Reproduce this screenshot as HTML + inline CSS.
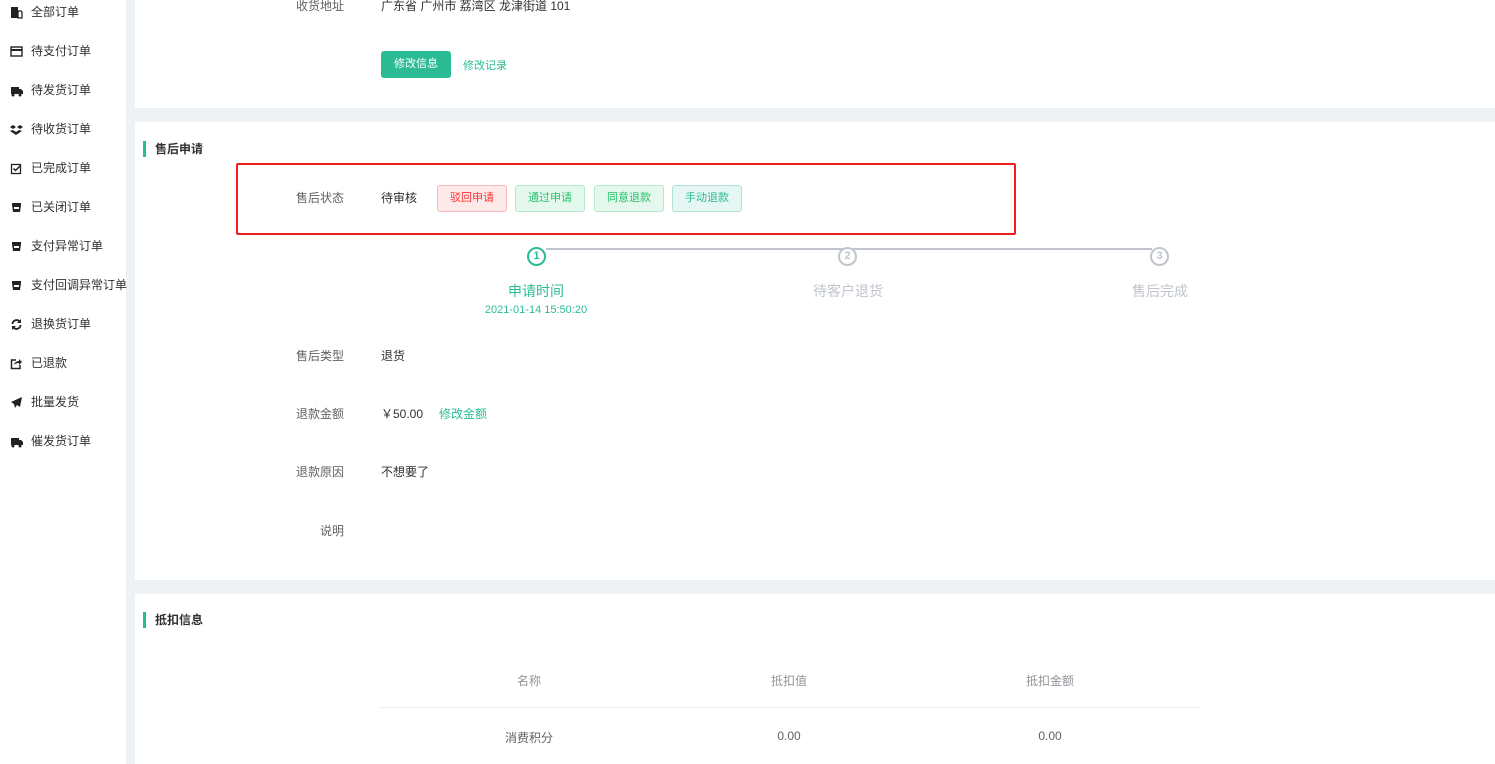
<!DOCTYPE html>
<html><head><meta charset="utf-8"><style>
*{margin:0;padding:0;box-sizing:border-box}
body{width:1495px;height:764px;overflow:hidden;background:#eff2f5;font-family:"Liberation Sans","Noto Sans CJK SC",sans-serif;font-size:12px;color:#333;position:relative}
.a{position:absolute;white-space:nowrap}
#side{position:absolute;left:0;top:0;width:126px;height:764px;background:#fff}
.it{position:absolute;left:10px;width:116px;height:16px;line-height:16px;font-size:12px;color:#303133;white-space:nowrap}
.it svg{position:absolute;left:0;top:2px}
.it span{position:absolute;left:21px;white-space:nowrap}
.card{position:absolute;left:135px;right:0;background:#fff}
.lbl{position:absolute;width:120px;left:224px;text-align:right;color:#606266;font-size:12px;line-height:16px}
.val{position:absolute;left:381px;color:#303133;font-size:12px;line-height:16px;white-space:nowrap}
.btn{position:absolute;top:185px;height:27px;width:70px;border-radius:3px;font-size:11px;line-height:25px;text-align:center;border:1px solid}
.ttl{position:absolute;left:143px;font-weight:bold;font-size:12px;color:#303133;padding-left:12px;line-height:14px}
.ttl:before{content:"";position:absolute;left:0;top:-1px;width:3px;height:16px;background:#2bbc96}
.circ{position:absolute;top:247px;width:19px;height:19px;border-radius:50%;border:2px solid #c0c4cc;color:#c0c4cc;font-size:11px;line-height:15px;text-align:center;background:#fff;font-weight:bold}
.stl{position:absolute;top:281px;width:200px;text-align:center;font-size:14px;color:#c0c4cc}
.th{position:absolute;width:200px;text-align:center;color:#909399;font-size:12px}
</style></head><body>
<div id="side">
<div class="it" style="top:4px"><svg width="13" height="13"><rect x="1" y="1" width="7" height="11" fill="#222"/><path d="M8 5h3l1 1v6H8z" fill="none" stroke="#222" stroke-width="1.3"/></svg><span>全部订单</span></div>
<div class="it" style="top:43px"><svg width="13" height="13"><rect x="1" y="2" width="11" height="9" fill="none" stroke="#222" stroke-width="1.4"/><rect x="1" y="4" width="11" height="2" fill="#222"/></svg><span>待支付订单</span></div>
<div class="it" style="top:82px"><svg width="13" height="13"><path d="M1 3h8v7H1zM9 5h2l2 2v3H9z" fill="#222"/><circle cx="3" cy="11" r="1.5" fill="#222"/><circle cx="10" cy="11" r="1.5" fill="#222"/></svg><span>待发货订单</span></div>
<div class="it" style="top:121px"><svg width="13" height="13"><path d="M3 2l3 2-3 2-3-2zM10 2l3 2-3 2-3-2zM3 7l3 2 3-2 3 1-6 4-6-4z" fill="#222"/></svg><span>待收货订单</span></div>
<div class="it" style="top:160px"><svg width="13" height="13"><rect x="1.5" y="2.5" width="9" height="9" fill="none" stroke="#222" stroke-width="1.3"/><path d="M3.5 6.5l2 2 5-5" fill="none" stroke="#222" stroke-width="1.5"/></svg><span>已完成订单</span></div>
<div class="it" style="top:199px"><svg width="13" height="13"><path d="M2 2h9v2l-1 7H3L2 4z" fill="#222"/><rect x="4" y="6" width="5" height="2" fill="#fff"/></svg><span>已关闭订单</span></div>
<div class="it" style="top:238px"><svg width="13" height="13"><path d="M2 2h9v2l-1 7H3L2 4z" fill="#222"/><rect x="4" y="6" width="5" height="2" fill="#fff"/></svg><span>支付异常订单</span></div>
<div class="it" style="top:277px"><svg width="13" height="13"><path d="M2 2h9v2l-1 7H3L2 4z" fill="#222"/><rect x="4" y="6" width="5" height="2" fill="#fff"/></svg><span>支付回调异常订单</span></div>
<div class="it" style="top:316px"><svg width="13" height="13"><path d="M2.5 6a4 4 0 0 1 7-2.5M10.5 7a4 4 0 0 1-7 2.5" fill="none" stroke="#222" stroke-width="1.8"/><path d="M11 1v4H7zM2 12V8h4z" fill="#222"/></svg><span>退换货订单</span></div>
<div class="it" style="top:355px"><svg width="13" height="13"><path d="M6 3H1.5v8.5h8.5V8" fill="none" stroke="#222" stroke-width="1.5"/><path d="M4 8q1-4 5-4V2l3 3-3 3V6q-3 0-5 2z" fill="#222"/></svg><span>已退款</span></div>
<div class="it" style="top:394px"><svg width="13" height="13"><path d="M12 1L1 6l3 2 1 4 2-3 3 2z" fill="#222"/></svg><span>批量发货</span></div>
<div class="it" style="top:433px"><svg width="13" height="13"><path d="M1 3h8v7H1zM9 5h2l2 2v3H9z" fill="#222"/><circle cx="3" cy="11" r="1.5" fill="#222"/><circle cx="10" cy="11" r="1.5" fill="#222"/></svg><span>催发货订单</span></div>
</div>

<div class="card" style="top:0;height:108px"></div>
<div class="card" style="top:122px;height:458px"></div>
<div class="card" style="top:594px;height:170px"></div>

<div class="lbl" style="top:-2px">收货地址</div>
<div class="val" style="top:-2px">广东省 广州市 荔湾区 龙津街道 101</div>
<div class="a" style="left:381px;top:51px;width:70px;height:27px;background:#2bbc96;border-radius:3px;color:#fff;font-size:11px;line-height:27px;text-align:center">修改信息</div>
<div class="a" style="left:463px;top:57px;color:#2bbc96;font-size:11px">修改记录</div>

<div class="ttl" style="top:142px">售后申请</div>
<div class="a" style="left:236px;top:163px;width:780px;height:72px;border:2px solid #f31d1d;border-radius:2px"></div>
<div class="lbl" style="top:190px">售后状态</div>
<div class="val" style="top:190px">待审核</div>
<div class="btn" style="left:437px;background:#fde9e9;border-color:#f9b8b8;color:#f33">驳回申请</div>
<div class="btn" style="left:515px;background:#e5f8ee;border-color:#b3ebcc;color:#26c26c">通过申请</div>
<div class="btn" style="left:594px;background:#e5f8ee;border-color:#b3ebcc;color:#26c26c">同意退款</div>
<div class="btn" style="left:672px;background:#e6f6f2;border-color:#b2e2d6;color:#2bbc96">手动退款</div>

<div class="a" style="left:546px;top:248px;width:606px;height:2px;background:#c0c4cc"></div>
<div class="circ" style="left:527px;border-color:#2bbc96;color:#2bbc96">1</div>
<div class="circ" style="left:838px">2</div>
<div class="circ" style="left:1150px">3</div>
<div class="stl" style="left:436px;color:#2bbc96">申请时间</div>
<div class="a" style="left:436px;top:304px;width:200px;text-align:center;font-size:11px;color:#2bbc96">2021-01-14 15:50:20</div>
<div class="stl" style="left:748px">待客户退货</div>
<div class="stl" style="left:1060px">售后完成</div>

<div class="lbl" style="top:348px">售后类型</div>
<div class="val" style="top:348px">退货</div>
<div class="lbl" style="top:406px">退款金额</div>
<div class="val" style="top:406px">￥50.00<span style="color:#2bbc96;margin-left:16px">修改金额</span></div>
<div class="lbl" style="top:464px">退款原因</div>
<div class="val" style="top:464px">不想要了</div>
<div class="lbl" style="top:523px">说明</div>

<div class="ttl" style="top:613px">抵扣信息</div>
<div class="th" style="left:429px;top:672px">名称</div>
<div class="th" style="left:689px;top:672px">抵扣值</div>
<div class="th" style="left:950px;top:672px">抵扣金额</div>
<div class="a" style="left:380px;top:707px;width:820px;height:1px;background:#ebeef5"></div>
<div class="th" style="left:429px;top:729px;color:#606266">消费积分</div>
<div class="th" style="left:689px;top:729px;color:#606266">0.00</div>
<div class="th" style="left:950px;top:729px;color:#606266">0.00</div>
</body></html>
